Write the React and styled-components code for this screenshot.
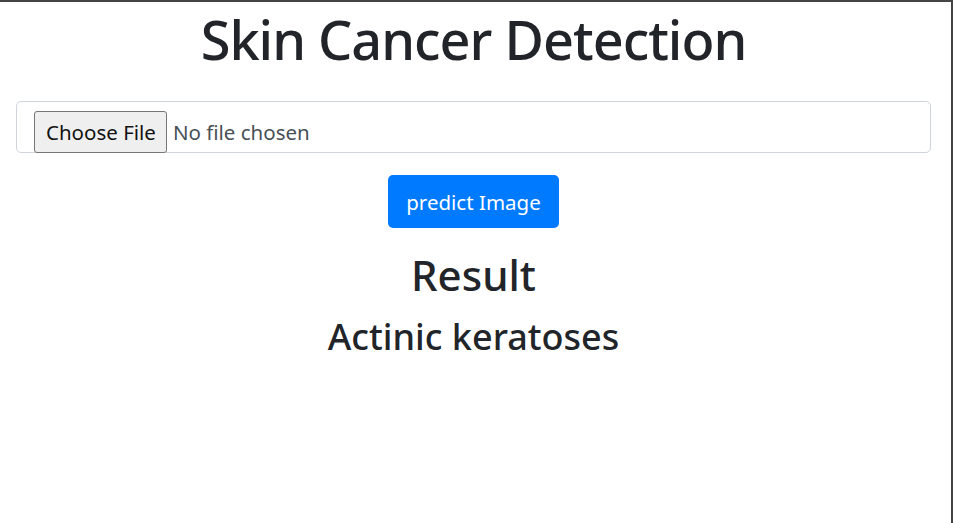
import React from "react";
import styled, { createGlobalStyle } from "styled-components";

const GlobalStyle = createGlobalStyle`
  html, body {
    margin: 0;
    padding: 0;
    background: #fff;
  }

  body {
    font-family: "Noto Sans", "Open Sans", sans-serif;
    color: #212529;
  }

  * {
    box-sizing: border-box;
  }
`;

const Frame = styled.div`
  min-height: 100vh;
  border-top: 2px solid #444;
  border-right: 2px solid #444;
  padding: 0 20px 0 16px;
`;

const Title = styled.h1`
  margin: 0;
  padding-top: 5px;
  font-size: 54px;
  font-weight: 500;
  letter-spacing: -1px;
  line-height: 65px;
  text-align: center;
`;

const UploadBox = styled.div`
  margin-top: 29px;
  height: 52px;
  padding: 9px 17px 0;
  border: 1px solid #ced4da;
  border-radius: 5px;
  display: flex;
  align-items: flex-start;
`;

const FileInput = styled.input`
  font-family: "Noto Sans", "Open Sans", sans-serif;
  font-size: 20.5px;
  color: #495057;

  &::file-selector-button {
    font-family: inherit;
    font-size: 20.5px;
    color: #111;
    height: 42px;
    padding: 0 10px 0 11px;
    margin-right: 6px;
    background: #efefef;
    border: 1px solid #767676;
    border-radius: 3px;
  }
`;

const Actions = styled.div`
  display: flex;
  justify-content: center;
  margin-top: 22px;
`;

const PredictButton = styled.button`
  width: 171px;
  height: 53px;
  border: none;
  border-radius: 5px;
  background: #007bff;
  color: #fff;
  font-family: inherit;
  font-size: 20.5px;
  cursor: pointer;
`;

const Heading = styled.h2`
  margin: ${(p) => p.$margin};
  font-size: ${(p) => p.$size}px;
  font-weight: 500;
  line-height: 1.2;
  text-align: center;
`;

export default function App() {
  return (
    <>
      <GlobalStyle />
      <Frame>
        <Title>Skin Cancer Detection</Title>
        <UploadBox>
          <FileInput type="file" name="file" />
        </UploadBox>
        <Actions>
          <PredictButton type="submit">predict Image</PredictButton>
        </Actions>
        <Heading $size={42} $margin="22px 0 0">
          Result
        </Heading>
        <Heading $size={36} $margin="15px 0 0">
          Actinic keratoses
        </Heading>
      </Frame>
    </>
  );
}
